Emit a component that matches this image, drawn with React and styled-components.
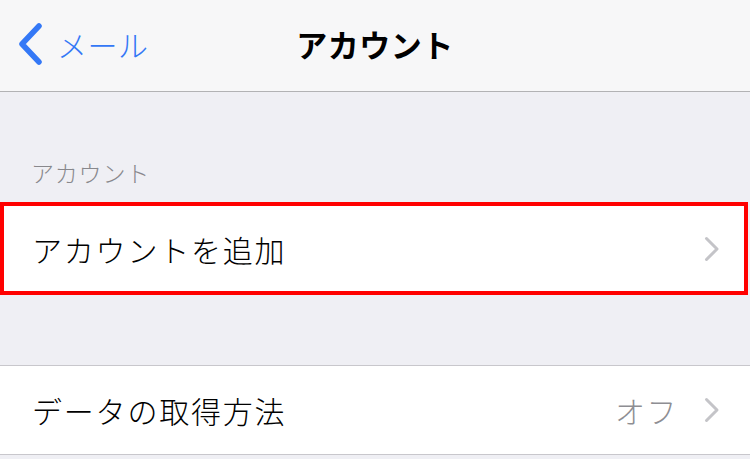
import styled, { createGlobalStyle } from 'styled-components';

const GlobalStyle = createGlobalStyle`
  html, body {
    margin: 0;
    padding: 0;
    background: #efeff4;
  }
  body {
    font-family: "Noto Sans CJK JP", "Noto Sans", sans-serif;
    -webkit-font-smoothing: antialiased;
  }
`;

const Screen = styled.div`
  width: 750px;
  height: 459px;
  overflow: hidden;
  background: #efeff4;
`;

const NavBar = styled.header`
  box-sizing: border-box;
  height: 92px;
  display: grid;
  grid-template-columns: 1fr auto 1fr;
  align-items: center;
  background: #f7f7f8;
  border-bottom: 1px solid #b2b2b4;
  padding-bottom: 4px;
`;

const BackButton = styled.div`
  display: flex;
  align-items: center;
  gap: 14px;
  padding-left: 17px;
  color: #3478f6;
  font-size: 30px;
  font-weight: 300;
  letter-spacing: 0.5px;
`;

const Title = styled.h1`
  margin: 0;
  font-size: 31px;
  font-weight: 700;
  color: #000;
  letter-spacing: 0.5px;
`;

const SectionHeader = styled.div`
  box-sizing: border-box;
  height: ${p => p.$height}px;
  display: flex;
  align-items: flex-end;
  padding: 0 0 ${p => p.$bottom}px 31px;
  color: #88888c;
  font-size: 23px;
  font-weight: 300;
  line-height: 30px;
  letter-spacing: 0.8px;
`;

const Row = styled.div`
  box-sizing: border-box;
  height: ${p => (p.$highlighted ? 93 : 90)}px;
  display: flex;
  align-items: center;
  background: #fff;
  padding: 0 30px 0 32px;
  ${p =>
    p.$highlighted
      ? `
    border: 4px solid #ff0000;
    margin-right: 2px;
    padding: 0 24px 0 28px;
  `
      : `
    border-top: 1px solid #c8c7cc;
    border-bottom: 1px solid #c8c7cc;
  `}
`;

const Label = styled.span`
  flex: 1;
  font-size: 30px;
  font-weight: 300;
  color: #000;
  letter-spacing: 1.8px;
`;

const Value = styled.span`
  font-size: 30px;
  font-weight: 300;
  color: #8e8e93;
  letter-spacing: 1.5px;
  margin-right: 26px;
`;

const Chevron = () => (
  <svg width="16" height="26" viewBox="0 0 16 26">
    <path
      d="M2.5 2.5 L13 13 L2.5 23.5"
      fill="none"
      stroke="#c4c4c8"
      strokeWidth="3"
      strokeLinecap="round"
      strokeLinejoin="round"
    />
  </svg>
);

const BackChevron = () => (
  <svg width="26" height="42" viewBox="0 0 26 42">
    <path
      d="M22 3 L5 21 L22 39"
      fill="none"
      stroke="#3478f6"
      strokeWidth="5.5"
      strokeLinecap="round"
      strokeLinejoin="round"
    />
  </svg>
);

export default function App() {
  return (
    <>
      <GlobalStyle />
      <Screen>
        <NavBar>
          <BackButton>
            <BackChevron />
            <span>メール</span>
          </BackButton>
          <Title>アカウント</Title>
          <div />
        </NavBar>
        <SectionHeader $height={110} $bottom={15}>
          アカウント
        </SectionHeader>
        <Row $highlighted>
          <Label>アカウントを追加</Label>
          <Chevron />
        </Row>
        <SectionHeader $height={70} $bottom={0} />
        <Row>
          <Label>データの取得方法</Label>
          <Value>オフ</Value>
          <Chevron />
        </Row>
      </Screen>
    </>
  );
}
